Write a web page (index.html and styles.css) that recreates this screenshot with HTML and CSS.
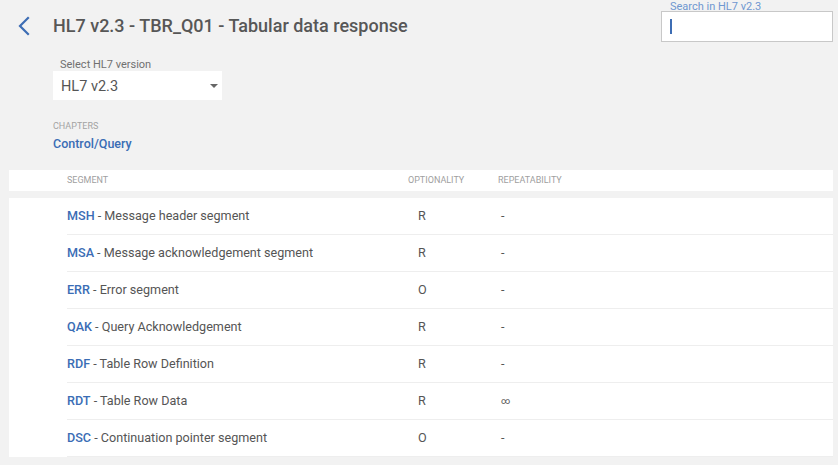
FILE: index.html
```html
<!DOCTYPE html>
<html lang="en">
<head>
<meta charset="utf-8">
<title>HL7 v2.3 - TBR_Q01</title>
<link rel="stylesheet" href="styles.css">
</head>
<body>
<div class="page">
  <div class="top">
    <div class="titlebar">
      <a class="back" href="#" aria-label="Back">
        <svg width="14" height="20" viewBox="0 0 14 20"><path d="M11 2 L3 10 L11 18" fill="none" stroke="#3d6db4" stroke-width="2.2" stroke-linecap="square"/></svg>
      </a>
      <h1 class="title">HL7 v2.3 - TBR_Q01 - Tabular data response</h1>
    </div>
    <div class="search">
      <label class="search-label">Search in HL7 v2.3</label>
      <div class="search-box"><span class="cursor"></span></div>
    </div>
  </div>

  <div class="version">
    <div class="version-label">Select HL7 version</div>
    <div class="select">
      <span class="select-value">HL7 v2.3</span>
      <span class="caret"></span>
    </div>
  </div>

  <div class="chapters">
    <div class="chapters-label">CHAPTERS</div>
    <a class="chapter-link" href="#">Control/Query</a>
  </div>

  <div class="table-head">
    <div class="cols">
      <div class="th">Segment</div>
      <div class="th">Optionality</div>
      <div class="th">Repeatability</div>
    </div>
  </div>

  <div class="table-body">
    <div class="cols row"><div class="seg"><span class="code">MSH</span> - Message header segment</div><div class="opt">R</div><div class="rep">-</div></div>
    <div class="cols row"><div class="seg"><span class="code">MSA</span> - Message acknowledgement segment</div><div class="opt">R</div><div class="rep">-</div></div>
    <div class="cols row"><div class="seg"><span class="code">ERR</span> - Error segment</div><div class="opt">O</div><div class="rep">-</div></div>
    <div class="cols row"><div class="seg"><span class="code">QAK</span> - Query Acknowledgement</div><div class="opt">R</div><div class="rep">-</div></div>
    <div class="cols row"><div class="seg"><span class="code">RDF</span> - Table Row Definition</div><div class="opt">R</div><div class="rep">-</div></div>
    <div class="cols row"><div class="seg"><span class="code">RDT</span> - Table Row Data</div><div class="opt">R</div><div class="rep inf">∞</div></div>
    <div class="cols row"><div class="seg"><span class="code">DSC</span> - Continuation pointer segment</div><div class="opt">O</div><div class="rep">-</div></div>
  </div>
</div>
</body>
</html>
```

FILE: styles.css
```css
* { box-sizing: border-box; }
html, body { margin: 0; padding: 0; }
body {
  background: #f2f2f2;
  font-family: Roboto, "Liberation Sans", Arial, sans-serif;
  color: #555;
  width: 838px;
  height: 465px;
  overflow: hidden;
}
.page { padding: 0 5px 0 9px; }

.top { display: flex; justify-content: space-between; align-items: flex-start; height: 42px; }
.titlebar { display: flex; align-items: center; padding-top: 14px; }
.back { display: block; width: 14px; height: 20px; margin-left: 8px; }
.back svg { display: block; }
.title {
  margin: 0 0 0 22px;
  font-size: 18px;
  line-height: 24px;
  font-weight: 500;
  color: #575757;
}

.search { width: 172px; }
.search-label {
  display: block;
  font-size: 11px;
  line-height: 11px;
  height: 11px;
  padding-top: 1px;
  color: #6f97d0;
  padding-left: 9px;
  overflow: visible;
}
.search-box {
  height: 31px;
  background: #fff;
  border: 1px solid #c8c8c8;
  padding: 7px 0 0 8px;
}
.cursor { display: block; width: 2px; height: 15px; background: #3d6db4; }

.version { margin: 17px 0 0 44px; }
.version-label { font-size: 11px; line-height: 12px; color: #707070; padding-left: 7px; }
.select {
  width: 169px;
  height: 29px;
  background: #fff;
  display: flex;
  align-items: center;
  justify-content: space-between;
  padding: 0 4px 0 8px;
}
.select-value { font-size: 14.5px; line-height: 29px; color: #555; padding-top: 1px; }
.caret {
  width: 0; height: 0;
  border-left: 4px solid transparent;
  border-right: 4px solid transparent;
  border-top: 4px solid #666;
  margin-top: 1px;
}

.chapters { margin: 21px 0 0 44px; }
.chapters-label { font-size: 9px; line-height: 11px; color: #a3a3a3; }
.chapter-link {
  display: block;
  margin-top: 4px;
  font-size: 12.5px;
  line-height: 16px;
  font-weight: 500;
  color: #3a6db5;
  text-decoration: none;
}

.cols { display: grid; grid-template-columns: 341px 90px 1fr; margin-left: 58px; }
.table-head { margin-top: 18px; background: #fff; height: 21px; }
.th {
  font-size: 9px;
  line-height: 21px;
  text-transform: uppercase;
  color: #a0a0a0;
}

.table-body { margin-top: 7px; background: #fff; }
.row { height: 37px; border-bottom: 1px solid #eeeeee; font-size: 12.6px; line-height: 36px; }
.code { color: #3a6db5; font-weight: 500; }
.seg { color: #555; }
.opt { padding-left: 10px; color: #555; }
.rep { padding-left: 3px; color: #555; }
.inf { font-size: 9px; }
```
